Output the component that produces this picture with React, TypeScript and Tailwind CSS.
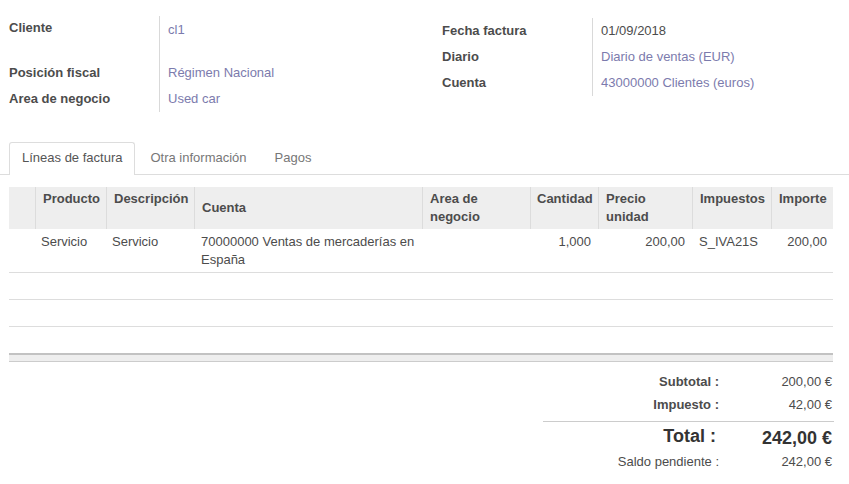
const font = { fontFamily: '"Liberation Sans", Arial, sans-serif' };

const cols = [
  { key: "handle", label: "", w: "w-[26px]" },
  { key: "prod", label: "Producto", w: "w-[71px]" },
  { key: "desc", label: "Descripción", w: "w-[88px]" },
  { key: "cuenta", label: "Cuenta", w: "w-[228px]", middle: true },
  { key: "area", label: "Area de negocio", w: "w-[108px]" },
  { key: "cant", label: "Cantidad", w: "w-[68px]" },
  { key: "precio", label: "Precio unidad", w: "w-[94px]" },
  { key: "imp", label: "Impuestos", w: "w-[79px]" },
  { key: "importe", label: "Importe", w: "w-[62px]" },
];

const Field = ({ label, children, tall }: { label: string; children: React.ReactNode; tall?: boolean }) => (
  <div className={`flex ${tall ? "h-[44px]" : "h-[26px]"}`}>
    <div className={`w-[150px] shrink-0 font-bold text-[#4c4c4c] ${tall ? "pt-[3px]" : "pt-[4px]"}`}>{label}</div>
    <div className={`flex-1 border-l border-[#d9d9d9] pl-[8px] ${tall ? "pt-[5px]" : "pt-[4px]"}`}>{children}</div>
  </div>
);

const Link = ({ children }: { children: React.ReactNode }) => (
  <span className="text-[#7c7bad]">{children}</span>
);

export default function App() {
  return (
    <div className="w-[849px] h-[484px] overflow-hidden bg-white text-[13px] leading-[18px] text-[#4c4c4c]" style={font}>
      {/* header fields */}
      <div className="flex items-start pl-[9px] pt-[16px]">
        <div className="w-[433px]">
          <Field label="Cliente" tall>
            <Link>cl1</Link>
          </Field>
          <Field label="Posición fiscal">
            <Link>Régimen Nacional</Link>
          </Field>
          <Field label="Area de negocio">
            <Link>Used car</Link>
          </Field>
        </div>
        <div className="mt-[2px] flex-1">
          <Field label="Fecha factura">01/09/2018</Field>
          <Field label="Diario">
            <Link>Diario de ventas (EUR)</Link>
          </Field>
          <Field label="Cuenta">
            <Link>43000000 Clientes (euros)</Link>
          </Field>
        </div>
      </div>

      {/* tabs */}
      <div className="mt-[30px] flex border-b border-[#dddddd] pl-[9px]">
        <div className="-mb-px rounded-t-[3px] border border-b-0 border-[#dddddd] bg-white px-[12px] pt-[6px] pb-[8px] text-[#555555]">
          Líneas de factura
        </div>
        <div className="ml-[2px] px-[13px] pt-[7px] pb-[7px] text-[#777777]">Otra información</div>
        <div className="ml-[2px] px-[13px] pt-[7px] pb-[7px] text-[#777777]">Pagos</div>
      </div>

      {/* lines table */}
      <div className="mt-[12px] ml-[9px] w-[824px]">
        <div className="flex h-[42px] bg-[#eeeeee] font-bold">
          {cols.map((c, i) => (
            <div
              key={c.key}
              className={`${c.w} shrink-0 px-[7px] ${i > 0 ? "border-l border-[#dcdcdc]" : ""} ${
                c.middle ? "flex items-center" : "pt-[3px]"
              } ${c.key === "cant" ? "pl-[6px]" : ""}`}
            >
              {c.label}
            </div>
          ))}
        </div>
        <div className="flex h-[44px] border-b border-[#dddddd] pt-[4px]">
          <div className="w-[26px] shrink-0" />
          <div className="w-[71px] shrink-0 px-[6px]">Servicio</div>
          <div className="w-[88px] shrink-0 px-[6px]">Servicio</div>
          <div className="w-[228px] shrink-0 px-[7px]">70000000 Ventas de mercaderías en España</div>
          <div className="w-[108px] shrink-0 px-[7px]" />
          <div className="w-[68px] shrink-0 px-[7px] text-right">1,000</div>
          <div className="w-[94px] shrink-0 px-[7px] text-right">200,00</div>
          <div className="w-[79px] shrink-0 px-[7px]">S_IVA21S</div>
          <div className="w-[62px] shrink-0 px-[6px] text-right">200,00</div>
        </div>
        <div className="h-[27px] border-b border-[#dddddd]" />
        <div className="h-[27px] border-b border-[#dddddd]" />
        <div className="h-[26px]" />
        <div className="h-[9px] border-t-2 border-b border-t-[#c2c2c2] border-b-[#cccccc] bg-[#eeeeee]" />
      </div>

      {/* totals */}
      <div className="ml-[543px] mt-[11px] w-[291px]">
        <div className="flex h-[23px]">
          <div className="w-[176px] text-right font-bold">Subtotal :</div>
          <div className="flex-1 pr-[2px] text-right">200,00 €</div>
        </div>
        <div className="flex h-[26px] border-b border-[#cccccc]">
          <div className="w-[176px] text-right font-bold">Impuesto :</div>
          <div className="flex-1 pr-[2px] text-right">42,00 €</div>
        </div>
        <div className="flex h-[28px] font-bold text-[18px] text-[#333333]">
          <div className="w-[173px] pt-[5px] text-right">Total :</div>
          <div className="flex-1 pt-[7px] pr-[2px] text-right">242,00 €</div>
        </div>
        <div className="flex h-[23px] pt-[3px]">
          <div className="w-[176px] text-right">Saldo pendiente :</div>
          <div className="flex-1 pr-[2px] text-right">242,00 €</div>
        </div>
      </div>
    </div>
  );
}
